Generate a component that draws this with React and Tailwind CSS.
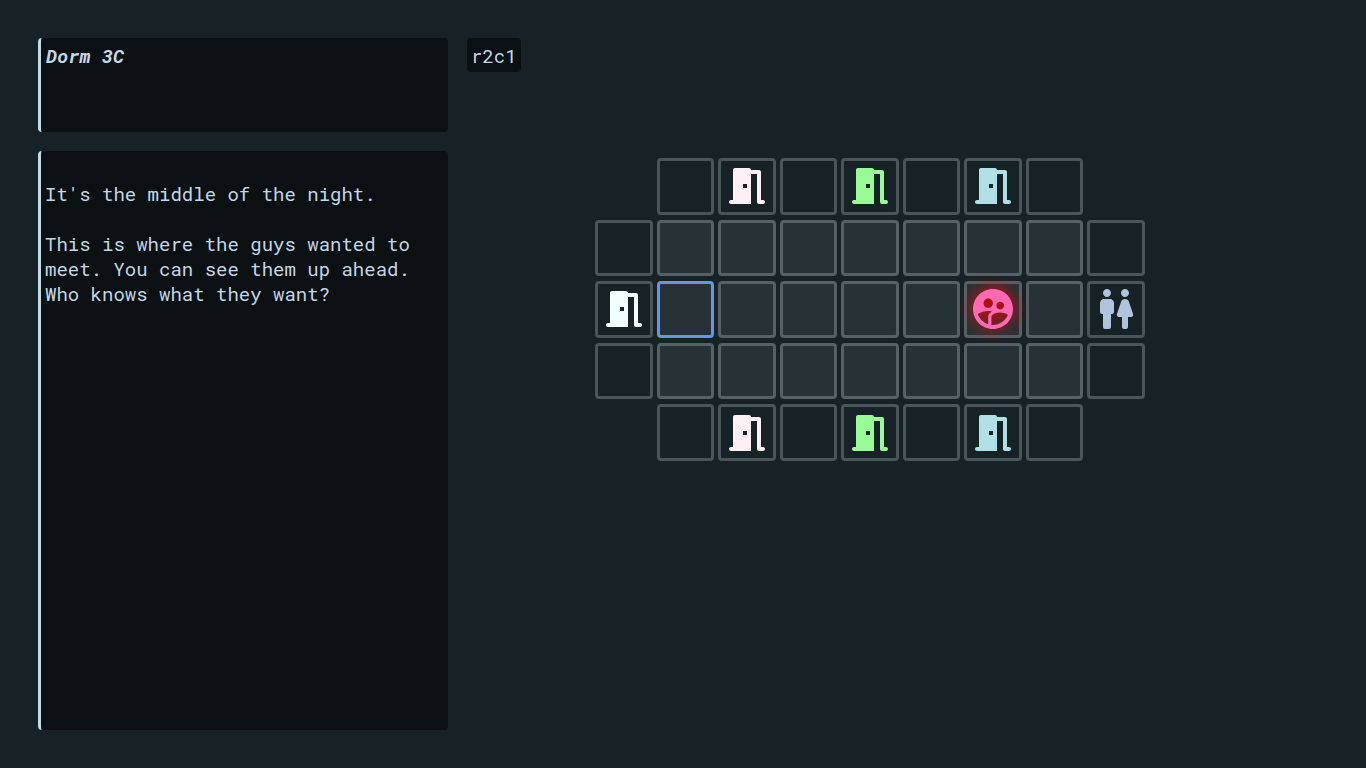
const DOOR =
  "M20 19h-1V5c0-.55-.45-1-1-1h-4c0-.55-.45-1-1-1H6c-.55 0-1 .45-1 1v15H4c-.55 0-1 .45-1 1s.45 1 1 1h10V6h3v14c0 .55.45 1 1 1h2c.55 0 1-.45 1-1s-.45-1-1-1zm-8-6h-2v-2h2v2z";
const RESTROOM =
  "M5.5 21v-6.5H5c-.55 0-1-.45-1-1V9c0-1.1.9-2 2-2h3c1.1 0 2 .9 2 2v4.5c0 .55-.45 1-1 1h-.5V21c0 .55-.45 1-1 1h-2c-.55 0-1-.45-1-1zM18 21v-5h1.61c.68 0 1.16-.67.95-1.32l-2.1-6.31C18.18 7.55 17.42 7 16.56 7h-.12c-.86 0-1.63.55-1.9 1.37l-2.1 6.31c-.22.65.26 1.32.95 1.32H15v5c0 .55.45 1 1 1h1c.55 0 1-.45 1-1zM7.5 6c1.11 0 2-.89 2-2s-.89-2-2-2-2 .89-2 2 .89 2 2 2zm9 0c1.11 0 2-.89 2-2s-.89-2-2-2-2 .89-2 2 .89 2 2 2z";
const GROUP =
  "M12 2C6.48 2 2 6.48 2 12s4.48 10 10 10 10-4.48 10-10S17.52 2 12 2zm3.61 6.34c1.07 0 1.93.86 1.93 1.93s-.86 1.93-1.93 1.93-1.93-.86-1.93-1.93c-.01-1.07.86-1.93 1.93-1.93zm-6-1.58c1.3 0 2.36 1.06 2.36 2.36s-1.06 2.36-2.36 2.36-2.36-1.06-2.36-2.36c0-1.31 1.05-2.36 2.36-2.36zm0 9.13v3.75c-2.4-.75-4.3-2.6-5.14-4.96 1.05-1.12 3.67-1.69 5.14-1.69.53 0 1.2.08 1.9.22-1.64.87-1.9 2.02-1.9 2.68zM12 20c-.27 0-.53-.01-.79-.04v-4.07c0-1.42 2.94-2.13 4.4-2.13 1.07 0 2.92.39 3.84 1.15C18.28 17.88 15.39 20 12 20z";

const ITEMS = {
  "0-2": { path: DOOR, color: "text-[#fff0f5]", label: "Pink door, north" },
  "0-4": { path: DOOR, color: "text-[#98fb98]", label: "Green door, north" },
  "0-6": { path: DOOR, color: "text-[#b0e0e6]", label: "Blue door, north" },
  "2-0": { path: DOOR, color: "text-[#f0ffff]", label: "West door" },
  "2-6": {
    path: GROUP,
    color: "text-[#ff69b4] drop-shadow-[0_0_8px_#ff0000]",
    label: "The guys",
  },
  "2-8": { path: RESTROOM, color: "text-[#b0c4de]", label: "Restroom" },
  "4-2": { path: DOOR, color: "text-[#fff0f5]", label: "Pink door, south" },
  "4-4": { path: DOOR, color: "text-[#98fb98]", label: "Green door, south" },
  "4-6": { path: DOOR, color: "text-[#b0e0e6]", label: "Blue door, south" },
};

const ROWS = [".wwwwwww.", "wfffffffw", "wpffffffw", "wfffffffw", ".wwwwwww."];

const CELL = {
  w: "border-[#4a5557]",
  f: "border-[#566165] bg-[#273237]",
  p: "border-[#6495ed] bg-[#273237]",
};

function Cell({ kind, item, name }) {
  if (kind === ".") return <span />;
  return (
    <button
      type="button"
      aria-label={item ? item.label : name}
      className={`flex min-w-0 items-center justify-center rounded-[4px] border-3 ${CELL[kind]}`}
    >
      {item && (
        <svg viewBox="0 0 24 24" fill="currentColor" className={`size-12 shrink-0 ${item.color}`}>
          <path d={item.path} />
        </svg>
      )}
    </button>
  );
}

export default function App() {
  return (
    <div className="flex min-h-screen gap-[19px] bg-[#172227] p-[38px] font-['Roboto_Mono','Liberation_Mono',monospace] text-[19px] leading-[25px] text-[#c4d7e4]">
      <div className="flex w-[410px] shrink-0 flex-col gap-[19px]">
        <header className="h-[94px] rounded-[4px] border-l-3 border-[#c4dbe6] bg-[#0b1013] px-[5px] py-[5px]">
          <h1 className="font-bold italic">Dorm 3C</h1>
        </header>
        <section className="flex flex-1 flex-col gap-[25px] rounded-[4px] border-l-3 border-[#c4dbe6] bg-[#0b1013] px-1 py-[30px]">
          <p>It's the middle of the night.</p>
          <p>This is where the guys wanted to meet. You can see them up ahead. Who knows what they want?</p>
        </section>
      </div>
      <main className="mr-[55px] flex flex-1 flex-col gap-[86px]">
        <div className="flex h-[34px] items-center self-start rounded-[4px] bg-[#0b1013] px-1">r2c1</div>
        <div className="grid h-[303px] w-full max-w-[550px] grid-cols-9 grid-rows-5 gap-x-1 gap-y-[5px] self-center">
          {ROWS.map((row, r) =>
            [...row].map((kind, c) => (
              <Cell key={`${r}-${c}`} kind={kind} item={ITEMS[`${r}-${c}`]} name={`r${r}c${c}`} />
            )),
          )}
        </div>
      </main>
    </div>
  );
}
